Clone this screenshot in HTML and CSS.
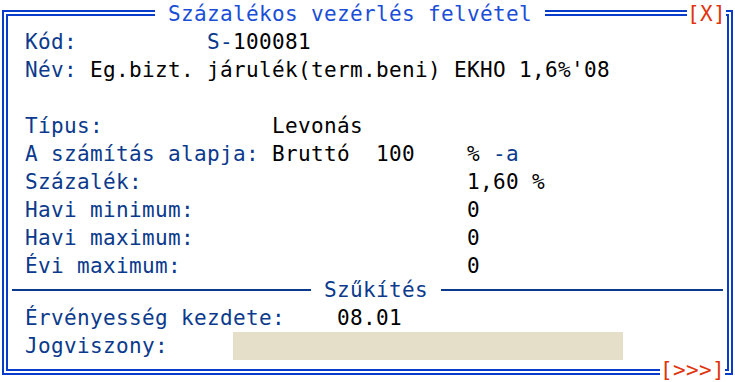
FILE: index.html
```html
<!DOCTYPE html>
<html lang="hu">
<head>
<meta charset="utf-8">
<title>Százalékos vezérlés felvétel</title>
<link rel="stylesheet" href="styles.css">
</head>
<body>
<div class="window">
  <div class="title"> Százalékos vezérlés felvétel </div>
  <div class="close">[X]</div>
  <div class="row"><span class="lbl">Kód:          S-</span>100081</div>
  <div class="row"><span class="lbl">Név:</span> Eg.bizt. járulék(term.beni) EKHO 1,6%'08</div>
  <div class="row"> </div>
  <div class="row"><span class="lbl">Típus:</span>             Levonás</div>
  <div class="row"><span class="lbl">A számítás alapja:</span> Bruttó  100    % <span class="lbl">-a</span></div>
  <div class="row"><span class="lbl">Százalék:</span>                         1,60 %</div>
  <div class="row"><span class="lbl">Havi minimum:</span>                     0</div>
  <div class="row"><span class="lbl">Havi maximum:</span>                     0</div>
  <div class="row"><span class="lbl">Évi maximum:</span>                      0</div>
  <div class="sep"><span class="sep-left"></span><span class="sep-text"> Szűkítés </span><span class="sep-right"></span></div>
  <div class="row"><span class="lbl">Érvényesség kezdete:</span>    08.01</div>
  <div class="row"><span class="lbl">Jogviszony:</span>     <span class="field"></span></div>
  <div class="more">[&gt;&gt;&gt;]</div>
</div>
</body>
</html>
```
FILE: styles.css
```css
html, body {
  margin: 0;
  padding: 0;
  background: #ffffff;
  overflow: hidden;
}

body {
  width: 735px;
  height: 382px;
  font-family: "DejaVu Sans Mono", "Liberation Mono", monospace;
  font-size: 21px;
  letter-spacing: 0.358px;
  color: #000000;
}

.window {
  position: relative;
  box-sizing: border-box;
  margin: 10px 2px 0 2px;
  width: 731px;
  height: 365px;
  border: 6px double #0a3ccc;
  padding: 12px 4px 0 4px;
}

.title {
  position: absolute;
  top: -16px;
  left: 147px;
  height: 28px;
  line-height: 28px;
  white-space: pre;
  background: #ffffff;
  color: #1a4ed6;
}

.close {
  position: absolute;
  top: -16px;
  left: 679px;
  width: 39px;
  height: 28px;
  line-height: 28px;
  background: #ffffff;
  color: #e0340e;
  white-space: pre;
}

.more {
  position: absolute;
  top: 342px;
  left: 652px;
  width: 65px;
  height: 24px;
  line-height: 24px;
  background: #ffffff;
  color: #e0340e;
  white-space: pre;
}

.row {
  height: 28px;
  line-height: 28px;
  padding-left: 13px;
  white-space: pre;
}

.lbl {
  color: #0b3a8c;
}

.sep {
  display: flex;
  align-items: flex-start;
  height: 24px;
}

.sep-left {
  flex: none;
  width: 299px;
  height: 2px;
  margin-top: 9px;
  background: #0b3a8c;
}

.sep-right {
  flex: 1;
  height: 2px;
  margin-top: 9px;
  background: #0b3a8c;
}

.sep-text {
  line-height: 20px;
  white-space: pre;
  color: #0b3a8c;
}

.field {
  display: inline-block;
  width: 390px;
  height: 28px;
  vertical-align: top;
  background: #e5dfc9;
}
```
